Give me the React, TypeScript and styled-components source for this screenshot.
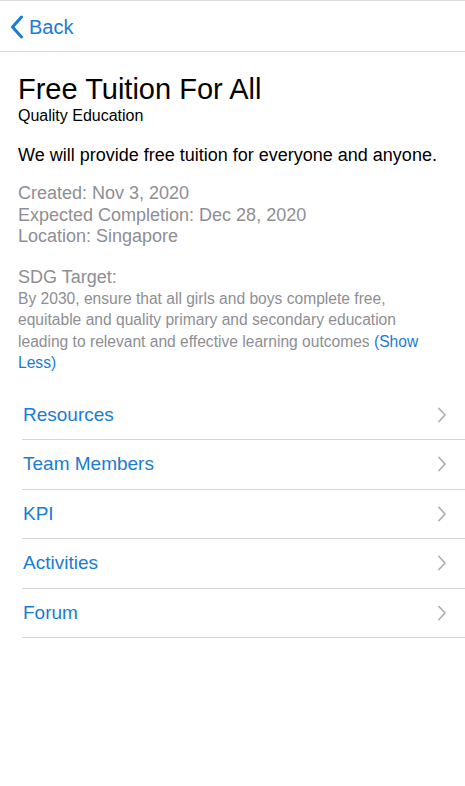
import React from 'react';
import styled, { createGlobalStyle } from 'styled-components';

const GlobalStyle = createGlobalStyle`
  html, body { margin: 0; padding: 0; background: #fff; }
  body { font-family: "Liberation Sans", Arial, sans-serif; }
`;

const Page = styled.div`
  width: 465px;
  min-height: 786px;
  background: #fff;
  border-top: 1px solid #dcdcdc;
  box-sizing: border-box;
`;

const NavBar = styled.div`
  height: 50px;
  display: flex;
  align-items: center;
  padding-left: 10px;
  border-bottom: 1px solid #dcdcdc;
  color: #1a7bd3;
`;

const BackButton = styled.button`
  display: flex;
  align-items: center;
  gap: 5px;
  background: none;
  border: 0;
  padding: 2px 0 0;
  color: inherit;
  font: inherit;
  font-size: 20px;
  cursor: pointer;
`;

const Content = styled.div`
  padding: 20px 0 0 18px;
`;

const Title = styled.h1`
  margin: 0;
  font-size: 29px;
  font-weight: 400;
  color: #000;
  line-height: 34px;
`;

const Subtitle = styled.div`
  font-size: 16px;
  color: #000;
  line-height: 20px;
`;

const Description = styled.p`
  margin: 18px 0 0;
  font-size: 18px;
  color: #000;
  line-height: 22px;
`;

const Meta = styled.div`
  margin-top: 17px;
  font-size: 18px;
  line-height: 21.5px;
  color: #8e8e93;
`;

const TargetLabel = styled.div`
  margin-top: 19px;
  font-size: 18px;
  line-height: 21px;
  color: #8e8e93;
`;

const TargetText = styled.div`
  font-size: 15.6px;
  line-height: 21.5px;
  color: #8e8e93;
  padding-right: 30px;
`;

const ShowLess = styled.span`
  color: #1a7bd3;
`;

const List = styled.ul`
  list-style: none;
  margin: 17px 0 0 22px;
  padding: 0;
`;

const Item = styled.li`
  height: 48.5px;
  display: flex;
  align-items: center;
  justify-content: space-between;
  border-bottom: 1px solid #d6d6d6;
  padding: 0 18px 0 1px;
  font-size: 19px;
  color: #1a7bd3;
`;

const Chevron = ({ color }: { color: string }) => (
  <svg width="10" height="16" viewBox="0 0 10 16" fill="none">
    <path d="M2 1.5 L8 8 L2 14.5" stroke={color} strokeWidth={1.8} strokeLinecap="round" strokeLinejoin="round" />
  </svg>
);

const BackIcon = () => (
  <svg width="14" height="24" viewBox="0 0 14 24" fill="none">
    <path d="M11.5 2 L2.5 12 L11.5 22" stroke="#1a7bd3" strokeWidth={3} strokeLinecap="round" strokeLinejoin="round" />
  </svg>
);

const sections = ['Resources', 'Team Members', 'KPI', 'Activities', 'Forum'];

export default function App() {
  return (
    <Page>
      <GlobalStyle />
      <NavBar>
        <BackButton>
          <BackIcon />
          Back
        </BackButton>
      </NavBar>
      <Content>
        <Title>Free Tuition For All</Title>
        <Subtitle>Quality Education</Subtitle>
        <Description>We will provide free tuition for everyone and anyone.</Description>
        <Meta>
          Created: Nov 3, 2020
          <br />
          Expected Completion: Dec 28, 2020
          <br />
          Location: Singapore
        </Meta>
        <TargetLabel>SDG Target:</TargetLabel>
        <TargetText>
          By 2030, ensure that all girls and boys complete free, equitable and quality primary and secondary
          education leading to relevant and effective learning outcomes <ShowLess>(Show Less)</ShowLess>
        </TargetText>
      </Content>
      <List>
        {sections.map((s) => (
          <Item key={s}>
            {s}
            <Chevron color="#b0b0b0" />
          </Item>
        ))}
      </List>
    </Page>
  );
}
